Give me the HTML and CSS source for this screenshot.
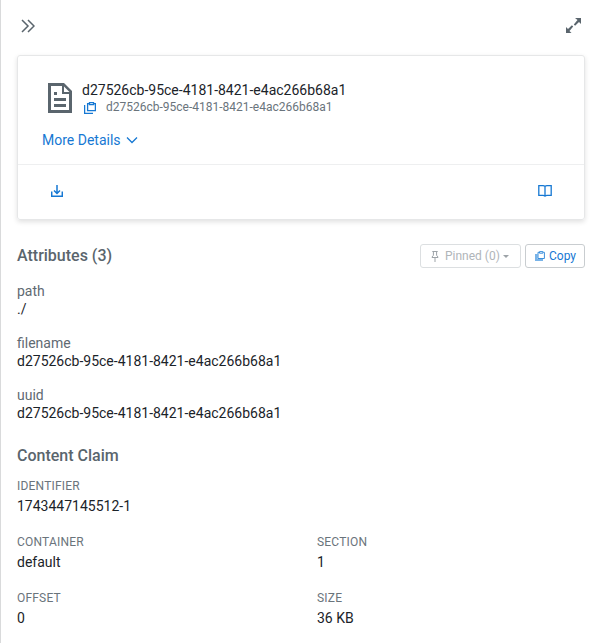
FILE: index.html
```
<!DOCTYPE html>
<html lang="en">
<head>
<meta charset="utf-8">
<title>FlowFile details</title>
<link rel="stylesheet" href="styles.css">
</head>
<body>
<main class="panel">
  <header class="toolbar">
    <svg class="icon-collapse" width="14" height="14" viewBox="0 0 14 14"><path d="M1 1l6 6-6 6M7 1l6 6-6 6"/></svg>
    <svg class="icon-expand" width="15" height="15" viewBox="0 0 15 15"><path d="M9 0h6v6l-2-2-3.9 3.7-1.3-1.3L11.5 2zM0 15V9l2 2 3.9-3.7 1.3 1.3L3.5 13l2 2z"/></svg>
  </header>
  <section class="card">
    <div class="summary">
      <div class="identity">
        <svg class="icon-file" width="24" height="30" viewBox="0 0 24 30"><path fill-rule="evenodd" d="M0 0h16l8 8v22H0zM3 3v24h18V11h-7V3zM16 3.5v5.5h5.5z"/><path d="M6 9h3v3H6zM6 15h12v3H6zM6 21h12v3H6z"/></svg>
        <div>
          <div class="title">d27526cb-95ce-4181-8421-e4ac266b68a1</div>
          <div class="subtitle">
            <svg class="line-icon" width="12" height="12" viewBox="0 0 12 12"><path d="M5 1.6H3.6v7h7.8v-7H10M5.5.6h4v2h-4zM.6 3v8.4H9"/></svg>
            <span>d27526cb-95ce-4181-8421-e4ac266b68a1</span>
          </div>
        </div>
      </div>
      <div class="more">More Details <svg class="line-icon" width="12" height="7" viewBox="0 0 12 7"><path d="M1 .5l5 5 5-5"/></svg></div>
    </div>
    <div class="actions">
      <svg class="line-icon download" width="12" height="12" viewBox="0 0 12 12"><path d="M6 0v8M3 5.5l3 3 3-3M.7 6.5v4.8h10.6V6.5"/></svg>
      <svg class="line-icon" width="14" height="12" viewBox="0 0 14 12"><path d="M7 1.4Q6.3.7 5 .7H.8v9.6H5q1.3 0 2 .8.7-.8 2-.8h4.2V.7H9q-1.3 0-2 .7v9.7"/></svg>
    </div>
  </section>
  <div class="section-head">
    <h2>Attributes (3)</h2>
    <div class="buttons">
      <button class="button pinned" disabled><svg class="pin" width="8" height="11" viewBox="0 0 8 11"><path d="M1.3 .5h5.4M2.4.5v3.8L1 6v.5h6V6L5.6 4.3V.5M4 6.5V11"/></svg><span>Pinned (0)</span><i class="caret"></i></button>
      <button class="button copy"><svg class="copy-icon" width="10" height="10" viewBox="0 0 10 10"><path class="sheet" d="M0 3h2.5v5H8v2H0z"/><path d="M4.2 1.3H3v6.2h6.4V1.3H8.2M4.5.6h3.4v1.6H4.5z"/></svg><span>Copy</span></button>
    </div>
  </div>
  <dl class="attributes">
    <div><dt>path</dt><dd>./</dd></div>
    <div><dt>filename</dt><dd>d27526cb-95ce-4181-8421-e4ac266b68a1</dd></div>
    <div><dt>uuid</dt><dd>d27526cb-95ce-4181-8421-e4ac266b68a1</dd></div>
  </dl>
  <h2 class="claim-title">Content Claim</h2>
  <dl class="claim">
    <div class="wide"><dt>IDENTIFIER</dt><dd>1743447145512-1</dd></div>
    <div><dt>CONTAINER</dt><dd>default</dd></div>
    <div><dt>SECTION</dt><dd>1</dd></div>
    <div><dt>OFFSET</dt><dd>0</dd></div>
    <div><dt>SIZE</dt><dd>36 KB</dd></div>
  </dl>
</main>
</body>
</html>
```
FILE: styles.css
```
* { box-sizing: border-box; }
body { margin: 0; background: #fff; color: #1b2329; font: 14px/18px Roboto, "Liberation Sans", sans-serif; }
svg { display: block; flex: none; }
h2, dl, dd { margin: 0; }
h2 { font-size: 16px; line-height: 24px; font-weight: 500; color: #5a656d; }
.panel { height: 643px; overflow: hidden; border-left: 1px solid #d9dadb; padding: 0 16px; }
.toolbar { height: 55px; display: flex; justify-content: space-between; padding: 18px 4px 0 4px; }
.icon-collapse { margin-top: 1px; fill: none; stroke: #5a656d; stroke-width: 1.5; }
.icon-expand { fill: #5a656d; }
.card { height: 165px; border: 1px solid #e6e7e8; border-radius: 3px; box-shadow: 0 2px 5px rgba(0, 0, 0, .12); }
.summary { height: 109px; border-bottom: 1px solid #eeeff0; padding: 25px 24px 0; }
.identity { display: flex; gap: 10px; padding-left: 6px; }
.icon-file { margin-top: 2px; fill: #5a656d; }
.title { line-height: 18px; }
.subtitle { display: flex; align-items: center; gap: 10px; padding-left: 2px; font-size: 12px; line-height: 16px; color: #6a747c; }
.subtitle svg { margin-top: 2px; }
.line-icon { fill: none; stroke: #1678d3; stroke-width: 1.3; }
.more { display: flex; align-items: center; gap: 5px; margin-top: 16px; color: #1678d3; }
.actions { display: flex; justify-content: space-between; padding: 20px 32px 0 33px; }
.download { stroke-width: 1.5; }
.section-head { display: flex; justify-content: space-between; align-items: center; margin-top: 24px; height: 24px; }
.buttons { display: flex; gap: 4px; }
.button { display: flex; align-items: center; height: 24px; padding: 0 8px; border: 1px solid #c9cdd0; border-radius: 3px; background: #fff; font: 12px/16px Roboto, sans-serif; }
.pinned { width: 101px; padding-left: 10px; border-color: #dcdfe1; color: #b0b5b9; }
.copy { width: 60px; padding-left: 9px; color: #1678d3; }
.pin { margin-right: 6px; fill: none; stroke: #9da3a8; }
.copy-icon { margin-right: 4px; fill: none; stroke: #3b8fdc; }
.copy-icon .sheet { fill: #78b3e8; stroke: none; }
.caret { margin-left: 3px; border: 3px solid transparent; border-top-color: #9da3a8; border-bottom: 0; }
.attributes { display: grid; gap: 16px; margin-top: 14px; }
.attributes dt { color: #5f6a72; }
.claim-title { margin-top: 22px; }
.claim { display: grid; grid-template-columns: 300px 1fr; row-gap: 16px; margin-top: 10px; }
.claim .wide { grid-column: 1 / -1; }
.claim dt { font-size: 12px; line-height: 16px; letter-spacing: .2px; color: #6a747c; }
.claim dd { line-height: 20px; padding: 2px 0; }
```
